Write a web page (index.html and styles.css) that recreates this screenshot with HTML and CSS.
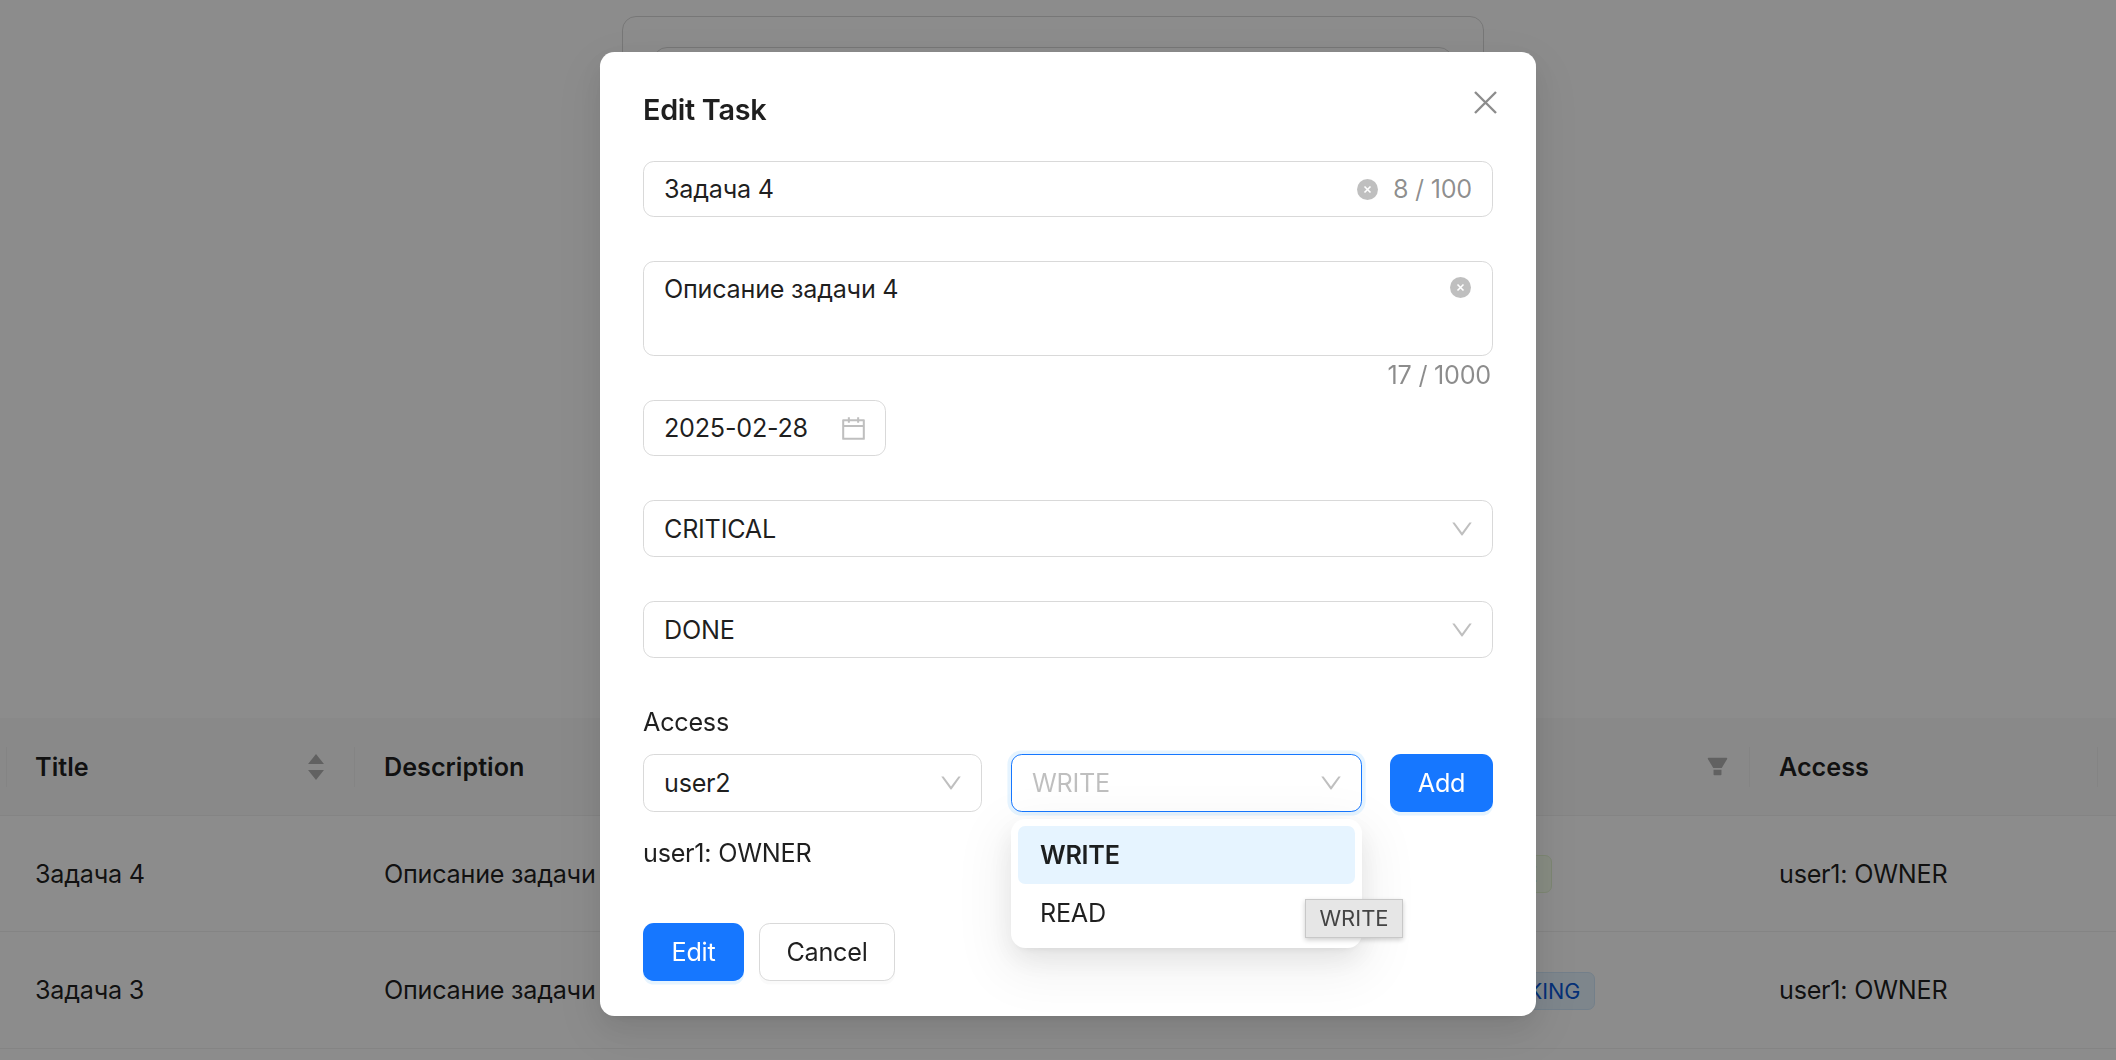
FILE: index.html
```html
<!DOCTYPE html>
<html lang="en">
<head>
  <meta charset="UTF-8" />
  <title>Edit Task</title>
  <link rel="stylesheet" href="styles.css">
</head>
<body>

<div class="page">
  <div class="card">
    <div class="card-inner"></div>
  </div>

  <div class="table">
    <div class="row head">
      <div class="cell col-title">Title
        <svg class="sort-icon" width="16" height="26" viewBox="0 0 16 26"><path d="M0 10 8 0l8 10zM0 16h16l-8 10z"/></svg>
      </div>
      <div class="cell">Description</div>
      <div class="cell"></div>
      <div class="cell col-status">
        <svg class="filter-icon" width="25" height="25" viewBox="0 0 1024 1024"><path d="M349 838c0 17.7 14.2 32 31.8 32h262.4c17.6 0 31.8-14.3 31.8-32V642H349v196zm531.1-684H143.9c-24.5 0-39.8 26.7-27.5 48l221.3 376h348.8l221.3-376c12.1-21.3-3.2-48-27.7-48z"/></svg>
      </div>
      <div class="cell col-last">Access</div>
    </div>
    <div class="row row-first">
      <div class="cell col-title">Задача 4</div>
      <div class="cell">Описание задачи 4</div>
      <div class="cell"></div>
      <div class="cell"><span class="tag tag-green">DONE</span></div>
      <div class="cell">user1: OWNER</div>
    </div>
    <div class="row">
      <div class="cell col-title">Задача 3</div>
      <div class="cell">Описание задачи 3</div>
      <div class="cell"></div>
      <div class="cell"><span class="tag tag-blue">WORKING</span></div>
      <div class="cell">user1: OWNER</div>
    </div>
  </div>
</div>

<div class="overlay">
  <div class="modal">
    <button class="modal-close" aria-label="Close">
      <svg width="23" height="23" viewBox="0 0 23 23"><path d="M1 1l21 21M22 1 1 22" fill="none" stroke="currentColor" stroke-width="2.4"/></svg>
    </button>
    <div class="modal-title">Edit Task</div>

    <div class="control field">
      <span class="grow">Задача 4</span>
      <svg class="clear-icon" width="21" height="21" viewBox="0 0 21 21"><circle cx="10.5" cy="10.5" r="10.5"/><path d="M7.5 7.5l6 6M13.5 7.5l-6 6"/></svg>
      <span class="count">8 / 100</span>
    </div>

    <div class="control textarea">
      <span>Описание задачи 4</span>
      <svg class="clear-icon textarea-clear" width="21" height="21" viewBox="0 0 21 21"><circle cx="10.5" cy="10.5" r="10.5"/><path d="M7.5 7.5l6 6M13.5 7.5l-6 6"/></svg>
    </div>
    <div class="textarea-count count">17 / 1000</div>

    <div class="control field date">
      <span class="grow">2025-02-28</span>
      <svg class="muted-icon" width="29" height="29" viewBox="0 0 1024 1024"><path d="M880 184H712v-64c0-4.4-3.6-8-8-8h-56c-4.4 0-8 3.6-8 8v64H384v-64c0-4.4-3.6-8-8-8h-56c-4.4 0-8 3.6-8 8v64H144c-17.7 0-32 14.3-32 32v664c0 17.7 14.3 32 32 32h736c17.7 0 32-14.3 32-32V216c0-17.7-14.3-32-32-32zm-40 656H184V460h656v380zM184 392V256h128v48c0 4.4 3.6 8 8 8h56c4.4 0 8-3.6 8-8v-48h256v48c0 4.4 3.6 8 8 8h56c4.4 0 8-3.6 8-8v-48h128v136H184z"/></svg>
    </div>

    <div class="control select field">
      <span class="grow">CRITICAL</span>
      <svg class="muted-icon" width="26" height="26" viewBox="0 0 1024 1024"><path d="M884 256h-75c-5.1 0-9.9 2.5-12.9 6.6L512 654.2 227.9 262.6c-3-4.1-7.8-6.6-12.9-6.6h-75c-6.5 0-10.3 7.4-6.5 12.7l352.6 486.1c12.8 17.6 39 17.6 51.7 0l352.6-486.1c3.9-5.3.1-12.7-6.4-12.7z"/></svg>
    </div>

    <div class="control select field">
      <span class="grow">DONE</span>
      <svg class="muted-icon" width="26" height="26" viewBox="0 0 1024 1024"><path d="M884 256h-75c-5.1 0-9.9 2.5-12.9 6.6L512 654.2 227.9 262.6c-3-4.1-7.8-6.6-12.9-6.6h-75c-6.5 0-10.3 7.4-6.5 12.7l352.6 486.1c12.8 17.6 39 17.6 51.7 0l352.6-486.1c3.9-5.3.1-12.7-6.4-12.7z"/></svg>
    </div>

    <div class="access-label">Access</div>
    <div class="access-row">
      <div class="control select user-select">
        <span class="grow">user2</span>
        <svg class="muted-icon" width="26" height="26" viewBox="0 0 1024 1024"><path d="M884 256h-75c-5.1 0-9.9 2.5-12.9 6.6L512 654.2 227.9 262.6c-3-4.1-7.8-6.6-12.9-6.6h-75c-6.5 0-10.3 7.4-6.5 12.7l352.6 486.1c12.8 17.6 39 17.6 51.7 0l352.6-486.1c3.9-5.3.1-12.7-6.4-12.7z"/></svg>
      </div>
      <div class="control select role-select">
        <span class="grow placeholder">WRITE</span>
        <svg class="muted-icon" width="26" height="26" viewBox="0 0 1024 1024"><path d="M884 256h-75c-5.1 0-9.9 2.5-12.9 6.6L512 654.2 227.9 262.6c-3-4.1-7.8-6.6-12.9-6.6h-75c-6.5 0-10.3 7.4-6.5 12.7l352.6 486.1c12.8 17.6 39 17.6 51.7 0l352.6-486.1c3.9-5.3.1-12.7-6.4-12.7z"/></svg>
        <div class="dropdown">
          <div class="option option-active">WRITE</div>
          <div class="option">READ</div>
        </div>
        <div class="native-tip">WRITE</div>
      </div>
      <button class="btn btn-primary btn-add">Add</button>
    </div>

    <div class="access-item">user1: OWNER</div>

    <div class="modal-actions">
      <button class="btn btn-primary btn-edit">Edit</button>
      <button class="btn btn-default">Cancel</button>
    </div>
  </div>
</div>

</body>
</html>
```

FILE: styles.css
```css
* {
  box-sizing: border-box;
}
html, body {
  height: 100%;
}
body {
  margin: 0;
  overflow: hidden;
  background: #fff;
  color: rgba(0,0,0,0.88);
  font-family: Inter, "Noto Sans", sans-serif;
  font-size: 25.2px;
  line-height: 38px;
  letter-spacing: -0.25px;
}

/* page behind the modal */
.page {
  padding-top: 16px;
}
.card {
  width: 862px;
  height: 674px;
  margin: 0 0 28px 622px;
  padding: 30px;
  border: 1px solid #d9d9d9;
  border-radius: 14px;
}
.card-inner {
  height: 300px;
  border: 1px solid #d9d9d9;
  border-radius: 14px;
}
.row {
  display: grid;
  grid-template-columns: 348px 646px 427px 322px 349px 18px;
  height: 117px;
  padding-left: 6px;
  align-items: center;
  border-bottom: 1px solid #f0f0f0;
}
.row-first {
  height: 116px;
}
.row.head {
  height: 98px;
  background: #fafafa;
  font-weight: 600;
  letter-spacing: 0;
}
.cell {
  position: relative;
  padding-left: 30px;
  white-space: nowrap;
}
.cell.col-title {
  padding-left: 29px;
}
.head .cell {
  display: flex;
  align-items: center;
  justify-content: space-between;
  height: 40px;
}
.head .cell::before {
  content: "";
  position: absolute;
  left: 0;
  top: 0;
  bottom: 0;
  width: 1px;
  background: #f0f0f0;
}
.head .cell:nth-child(3)::before,
.head .cell:nth-child(4)::before {
  display: none;
}
.head .col-last::after {
  content: "";
  position: absolute;
  right: 0;
  top: 0;
  bottom: 0;
  width: 1px;
  background: #f0f0f0;
}
.sort-icon {
  margin-right: 30px;
  fill: rgba(0,0,0,0.29);
}
.col-status {
  justify-content: flex-end !important;
}
.filter-icon {
  margin-right: 19px;
  fill: rgba(0,0,0,0.29);
}
.tag {
  display: inline-block;
  height: 38px;
  margin-left: 4px;
  padding: 0 14px;
  font-size: 21.6px;
  line-height: 36px;
  letter-spacing: 0;
  border-radius: 7px;
  border: 1px solid;
}
.tag-green {
  background: #f6ffed;
  border-color: #e4f6d2;
  color: #389e0d;
}
.tag-blue {
  background: #e6f4ff;
  border-color: #d2e8fb;
  color: #0958d9;
}

/* modal */
.overlay {
  position: fixed;
  top: 0;
  left: 0;
  right: 0;
  bottom: 0;
  display: flex;
  justify-content: center;
  align-items: flex-start;
  padding: 52px 0 0 20px;
  background: rgba(0,0,0,0.45);
}
.modal {
  position: relative;
  width: 936px;
  height: 964px;
  padding: 36px 43px;
  background: #fff;
  border-radius: 14.4px;
  box-shadow: 0 11px 29px rgba(0,0,0,0.08), 0 5px 11px -7px rgba(0,0,0,0.12), 0 16px 50px 14px rgba(0,0,0,0.05);
}
.modal-close {
  position: absolute;
  top: 39px;
  right: 39px;
  width: 23px;
  height: 23px;
  padding: 0;
  border: 0;
  background: none;
  color: rgba(0,0,0,0.45);
}
.modal-close svg {
  display: block;
}
.modal-title {
  height: 43px;
  margin-bottom: 30px;
  font-size: 28.8px;
  line-height: 43px;
  font-weight: 600;
  letter-spacing: -0.3px;
}
.control {
  position: relative;
  display: flex;
  align-items: center;
  padding: 0 20px;
  background: #fff;
  border: 1px solid #d9d9d9;
  border-radius: 10.8px;
}
.field {
  height: 56px;
  margin-bottom: 44px;
}
.select.field {
  height: 57px;
}
.grow {
  flex: 1;
}
.count {
  color: rgba(0,0,0,0.45);
}
.clear-icon {
  flex: none;
  margin-right: 15px;
  fill: rgba(0,0,0,0.25);
}
.clear-icon path {
  stroke: #fff;
  stroke-width: 1.6;
  fill: none;
}
.textarea {
  height: 95px;
  align-items: flex-start;
  padding-top: 8px;
}
.textarea-clear {
  position: absolute;
  top: 15px;
  right: 21px;
  margin: 0;
}
.textarea-count {
  height: 38px;
  margin-bottom: 6px;
  text-align: right;
  padding-right: 2px;
}
.date {
  width: 243px;
}
.muted-icon {
  flex: none;
  margin-right: -3px;
  fill: rgba(0,0,0,0.25);
}
.access-label {
  height: 40px;
  line-height: 40px;
  margin-bottom: 12px;
}
.access-row {
  display: flex;
  height: 58px;
  gap: 29px;
}
.user-select {
  width: 339px;
}
.role-select {
  width: 351px;
  margin-right: -1px;
  border-color: #1677ff;
  box-shadow: 0 0 0 3.6px rgba(5,145,255,0.1);
}
.placeholder {
  color: rgba(0,0,0,0.25);
}
.dropdown {
  position: absolute;
  top: 64px;
  left: -1px;
  width: 351px;
  height: 129px;
  padding: 7px;
  background: #fff;
  border-radius: 14.4px;
  box-shadow: 0 11px 29px rgba(0,0,0,0.08), 0 5px 11px -7px rgba(0,0,0,0.12), 0 16px 50px 14px rgba(0,0,0,0.05);
}
.option {
  height: 58px;
  padding: 0 22px;
  line-height: 58px;
  border-radius: 7.2px;
}
.option-active {
  background: #e6f4ff;
  font-weight: 600;
}
.native-tip {
  position: absolute;
  top: 144px;
  left: 293px;
  width: 98px;
  height: 39px;
  background: #e6e6e6;
  border: 1px solid #c8c8c8;
  color: #444;
  font-size: 22px;
  line-height: 37px;
  letter-spacing: 0;
  text-align: center;
  box-shadow: 0 2px 5px rgba(0,0,0,0.2);
}
.btn {
  height: 58px;
  padding: 0 26.5px;
  font-family: inherit;
  font-size: 25.2px;
  letter-spacing: -0.25px;
  border-radius: 10.8px;
  border: 1px solid transparent;
}
.btn-primary {
  background: #1677ff;
  color: #fff;
  box-shadow: 0 3.6px 0 rgba(5,145,255,0.1);
}
.btn-default {
  background: #fff;
  border-color: #d9d9d9;
  color: rgba(0,0,0,0.88);
  box-shadow: 0 3.6px 0 rgba(0,0,0,0.02);
}
.btn-add {
  width: 103px;
  padding: 0;
}
.btn-edit {
  padding: 0 27.5px;
}
.access-item {
  height: 36px;
  margin-top: 23px;
  line-height: 36px;
}
.modal-actions {
  display: flex;
  gap: 15px;
  margin-top: 52px;
}
```
